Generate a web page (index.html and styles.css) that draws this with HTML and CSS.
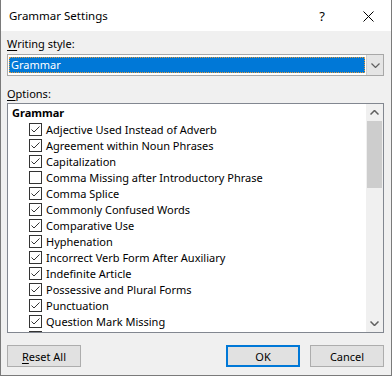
FILE: index.html
```html
<!DOCTYPE html>
<html>
<head>
    <title>Grammar Settings</title>
    <link rel="stylesheet" href="styles.css">
</head>
<body>
    <div class="dialog">
        <div class="titlebar">
            <span class="title">Grammar Settings</span>
            <span class="help">?</span>
            <span class="close">
                <svg width="11" height="11" viewBox="0 0 11 11"><path d="M0.5 0.5L10.5 10.5M10.5 0.5L0.5 10.5" stroke="#000" stroke-width="1" fill="none"/></svg>
            </span>
        </div>
        <div class="content">
            <div class="label"><u>W</u>riting style:</div>
            <div class="select">
                <div class="select-value"><span>Grammar</span></div>
                <div class="select-btn">
                    <svg width="9" height="5" viewBox="0 0 9 5"><path d="M0.5 0.5L4.5 4.5L8.5 0.5" stroke="#606060" stroke-width="1.2" fill="none"/></svg>
                </div>
            </div>
            <div class="label options-label"><u>O</u>ptions:</div>
            <div class="listbox">
                <div class="list">
                    <div class="group">Grammar</div>
                    <div class="row"><span class="check on"></span>Adjective Used Instead of Adverb</div>
                    <div class="row"><span class="check on"></span>Agreement within Noun Phrases</div>
                    <div class="row"><span class="check on"></span>Capitalization</div>
                    <div class="row"><span class="check"></span>Comma Missing after Introductory Phrase</div>
                    <div class="row"><span class="check on"></span>Comma Splice</div>
                    <div class="row"><span class="check on"></span>Commonly Confused Words</div>
                    <div class="row"><span class="check on"></span>Comparative Use</div>
                    <div class="row"><span class="check on"></span>Hyphenation</div>
                    <div class="row"><span class="check on"></span>Incorrect Verb Form After Auxiliary</div>
                    <div class="row"><span class="check on"></span>Indefinite Article</div>
                    <div class="row"><span class="check on"></span>Possessive and Plural Forms</div>
                    <div class="row"><span class="check on"></span>Punctuation</div>
                    <div class="row"><span class="check on"></span>Question Mark Missing</div>
                    <div class="row"><span class="check on"></span></div>
                </div>
                <div class="scrollbar">
                    <div class="arrow">
                        <svg width="9" height="5" viewBox="0 0 9 5"><path d="M0.5 4.5L4.5 0.5L8.5 4.5" stroke="#606060" stroke-width="1.5" fill="none"/></svg>
                    </div>
                    <div class="thumb"></div>
                    <div class="track"></div>
                    <div class="arrow">
                        <svg width="9" height="5" viewBox="0 0 9 5"><path d="M0.5 0.5L4.5 4.5L8.5 0.5" stroke="#606060" stroke-width="1.5" fill="none"/></svg>
                    </div>
                </div>
            </div>
            <div class="footer">
                <button class="button"><u>R</u>eset All</button>
                <span class="spacer"></span>
                <button class="button default">OK</button>
                <button class="button">Cancel</button>
            </div>
        </div>
    </div>
</body>
</html>
```

FILE: styles.css
```css
body {
    margin: 0;
    font-family: "Noto Sans", "Open Sans", sans-serif;
    font-size: 11px;
    color: #000;
}
.dialog {
    width: 392px;
    height: 376px;
    box-sizing: border-box;
    border: 1px solid #7a7a7a;
    border-top: none;
    background: #f0f0f0;
    display: flex;
    flex-direction: column;
}
.titlebar {
    height: 31px;
    background: #fff;
    display: flex;
    align-items: center;
    padding-left: 8px;
}
.title {
    flex: 1;
    font-size: 11.5px;
}
.help {
    width: 46px;
    text-align: center;
    font-size: 13px;
}
.close {
    width: 46px;
    display: flex;
    justify-content: center;
    padding-top: 1px;
}
.content {
    padding: 5px 6px 0 6px;
    display: flex;
    flex-direction: column;
    flex: 1;
}
.label {
    height: 16px;
    line-height: 16px;
    margin-bottom: 2px;
}
.label u, .button u {
    text-decoration-thickness: 1px;
    text-underline-offset: 2px;
}
.select {
    height: 22px;
    box-sizing: border-box;
    border: 1px solid #a8a8a8;
    background: #fff;
    display: flex;
    margin-right: 1px;
}
.select-value {
    flex: 1;
    padding: 2px 1px 2px 1px;
}
.select-value span {
    display: block;
    height: 100%;
    box-sizing: border-box;
    background: #0078d7;
    color: #fff;
    border: 1px dotted #000;
    outline: 1px dotted #e39a3a;
    outline-offset: -1px;
    padding-left: 1px;
    line-height: 14px;
}
.select-btn {
    width: 16px;
    background: #e5e5e5;
    border-left: 1px solid #d0d0d0;
    display: flex;
    align-items: center;
    justify-content: center;
}
.options-label {
    margin-top: 10px;
    margin-bottom: 0;
}
.listbox {
    height: 230px;
    box-sizing: border-box;
    border: 1px solid #828790;
    background: #fff;
    display: flex;
    overflow: hidden;
    margin-top: 1px;
    margin-right: 1px;
}
.list {
    flex: 1;
    padding: 1px 0 0 4px;
    overflow: hidden;
}
.group {
    height: 16px;
    line-height: 16px;
    font-weight: bold;
}
.row {
    height: 16px;
    display: flex;
    align-items: center;
    padding-left: 17px;
    white-space: nowrap;
}
.check {
    width: 13px;
    height: 13px;
    box-sizing: border-box;
    border: 1px solid #333;
    margin-right: 4px;
    flex: none;
    background: #fff;
}
.check.on {
    background: url("data:image/svg+xml;utf8,<svg xmlns='http://www.w3.org/2000/svg' width='11' height='11' viewBox='0 0 11 11'><path d='M1.5 5.5L4 8L9.5 2.5' stroke='%23333' stroke-width='1' fill='none'/></svg>") no-repeat center #fff;
}
.scrollbar {
    width: 17px;
    background: #f0f0f0;
    display: flex;
    flex-direction: column;
}
.arrow {
    height: 17px;
    display: flex;
    align-items: center;
    justify-content: center;
}
.thumb {
    height: 67px;
    margin: 0 1px;
    background: #cdcdcd;
}
.track {
    flex: 1;
}
.footer {
    display: flex;
    margin-top: 12px;
    margin-right: 1px;
    gap: 10px;
}
.spacer {
    flex: 1;
}
.button {
    width: 74px;
    height: 22px;
    box-sizing: border-box;
    border: 1px solid #adadad;
    background: #e1e1e1;
    font-family: "Noto Sans", "Open Sans", sans-serif;
    font-size: 11px;
    padding: 0;
    color: #000;
}
.button.default {
    border: 2px solid #0078d7;
}
```
